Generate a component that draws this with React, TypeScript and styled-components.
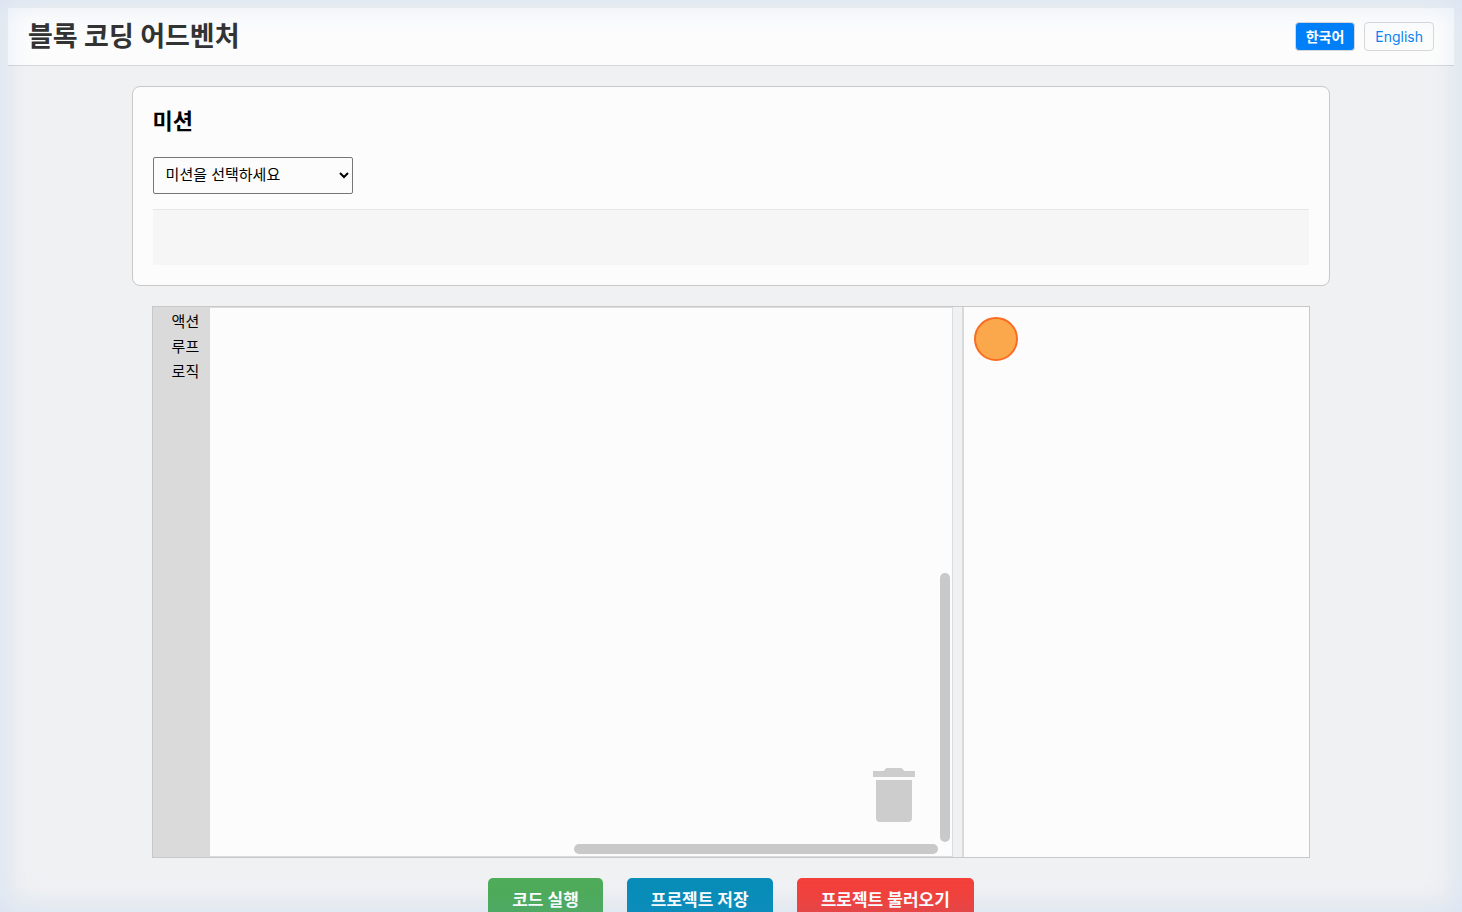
import React, { useState } from "react";
import styled, { createGlobalStyle } from "styled-components";

const GlobalStyle = createGlobalStyle`
  body {
    margin: 0;
    background: #f0f1f3;
    color: #000;
    font-family: Inter, "Noto Sans CJK KR", sans-serif;
  }
  button, select {
    font-family: inherit;
  }
`;

const Page = styled.div`
  box-sizing: border-box;
  height: 100vh;
  padding: 8px;
  overflow: hidden;
`;

const Glow = styled.div`
  position: fixed;
  inset: 0;
  z-index: 10;
  pointer-events: none;
  box-shadow: inset 0 0 30px 4px rgba(74, 144, 226, 0.14);
`;

const Header = styled.header`
  display: flex;
  align-items: center;
  justify-content: space-between;
  box-sizing: border-box;
  height: 58px;
  padding: 0 20px;
  background: #fcfcfc;
  border-bottom: 1px solid #d6d7d9;
`;

const Title = styled.h1`
  margin: 0;
  color: #333;
  font-size: 27px;
  line-height: 40px;
  font-weight: 700;
`;

const LanguageSwitch = styled.div`
  display: flex;
  gap: 9px;
`;

const LanguageButton = styled.button<{ $active: boolean }>`
  box-sizing: border-box;
  height: 29px;
  padding: 0 10px;
  border: 1px solid #d6d7d9;
  border-radius: 4px;
  background: ${({ $active }) => ($active ? "#007ff8" : "#fcfcfc")};
  color: ${({ $active }) => ($active ? "#fff" : "#0a84f0")};
  font-size: 14px;
  line-height: 20px;
  font-weight: ${({ $active }) => ($active ? 700 : 400)};
  cursor: pointer;
`;

const MissionCard = styled.section`
  width: 80%;
  margin: 20px auto;
  padding: 20px;
  background: #fcfcfc;
  border: 1px solid #c8c8c8;
  border-radius: 8px;
`;

const MissionTitle = styled.h2`
  margin: 0 0 22px;
  font-size: 22px;
  line-height: 28px;
  font-weight: 700;
`;

const MissionSelect = styled.select`
  display: block;
  box-sizing: border-box;
  width: 200px;
  height: 37px;
  padding: 0 8px 2px;
  border: 1px solid #767676;
  border-radius: 2px;
  background-color: #fcfcfc;
  color: #000;
  font-size: 15px;
`;

const MissionDescription = styled.div`
  box-sizing: border-box;
  height: 56px;
  margin-top: 15px;
  background: #f6f6f6;
  border-top: 1px solid #e6e6e6;
`;

const Workspace = styled.main`
  display: flex;
  width: 80%;
  height: 550px;
  margin: 0 auto;
  border: 1px solid #c8c8c8;
`;

const Editor = styled.div`
  display: flex;
  box-sizing: border-box;
  width: 70%;
  padding-right: 9px;
`;

const Toolbox = styled.nav`
  display: flex;
  flex-direction: column;
  width: 57px;
  padding-top: 2px;
  box-sizing: border-box;
  background: #dadada;
`;

const Category = styled.button`
  height: 25px;
  padding: 0 0 0 19px;
  border: 0;
  background: transparent;
  color: #000;
  text-align: left;
  font-size: 15px;
  line-height: 22px;
  cursor: pointer;
`;

const Canvas = styled.div`
  position: relative;
  flex: 1;
  background: #fcfcfc;
  border: 1px solid #dcdcdc;
  border-left: 0;
`;

const ScrollHandle = styled.div<{ $vertical?: boolean }>`
  position: absolute;
  right: ${({ $vertical }) => ($vertical ? "2px" : "14px")};
  bottom: ${({ $vertical }) => ($vertical ? "14px" : "2px")};
  width: ${({ $vertical }) => ($vertical ? "10px" : "49%")};
  height: ${({ $vertical }) => ($vertical ? "49%" : "10px")};
  border-radius: 5px;
  background: #c9c9c9;
`;

const Trash = styled.svg`
  position: absolute;
  right: 37px;
  bottom: 34px;
  width: 42px;
  height: 54px;
  fill: #cdcdcd;
`;

const Stage = styled.div`
  box-sizing: border-box;
  width: 30%;
  padding: 10px;
  background: #fcfcfc;
  border-left: 2px solid #dadada;
`;

const Character = styled.div`
  box-sizing: border-box;
  width: 44px;
  height: 44px;
  border: 2px solid #fb6b20;
  border-radius: 50%;
  background: #fba84c;
`;

const Actions = styled.div`
  display: flex;
  justify-content: center;
  gap: 24px;
  padding: 20px 0;
`;

const ActionButton = styled.button<{ $color: string }>`
  height: 44px;
  padding: 0 24px;
  border: 0;
  border-radius: 5px;
  background: ${({ $color }) => $color};
  color: #fff;
  font-size: 17px;
  line-height: 24px;
  font-weight: 700;
  cursor: pointer;
`;

const categories = ["액션", "루프", "로직"];

const actions = [
  { label: "코드 실행", color: "#4fac59" },
  { label: "프로젝트 저장", color: "#088db8" },
  { label: "프로젝트 불러오기", color: "#f4403a" },
];

export default function App() {
  const [language, setLanguage] = useState("ko");

  return (
    <Page>
      <GlobalStyle />
      <Header>
        <Title>블록 코딩 어드벤처</Title>
        <LanguageSwitch>
          <LanguageButton $active={language === "ko"} onClick={() => setLanguage("ko")}>
            한국어
          </LanguageButton>
          <LanguageButton $active={language === "en"} onClick={() => setLanguage("en")}>
            English
          </LanguageButton>
        </LanguageSwitch>
      </Header>
      <MissionCard>
        <MissionTitle id="mission-title">미션</MissionTitle>
        <MissionSelect aria-labelledby="mission-title" defaultValue="">
          <option value="">미션을 선택하세요</option>
        </MissionSelect>
        <MissionDescription />
      </MissionCard>
      <Workspace>
        <Editor>
          <Toolbox>
            {categories.map((name) => (
              <Category key={name}>{name}</Category>
            ))}
          </Toolbox>
          <Canvas>
            <Trash viewBox="0 0 42 54" aria-hidden="true">
              <path d="M0 3h10.500l3-3h15l3 3H42v6H0z" />
              <path d="M3 12h36v38a4 4 0 0 1-4 4H7a4 4 0 0 1-4-4z" />
            </Trash>
            <ScrollHandle $vertical />
            <ScrollHandle />
          </Canvas>
        </Editor>
        <Stage>
          <Character />
        </Stage>
      </Workspace>
      <Actions>
        {actions.map(({ label, color }) => (
          <ActionButton key={label} $color={color}>
            {label}
          </ActionButton>
        ))}
      </Actions>
      <Glow />
    </Page>
  );
}
